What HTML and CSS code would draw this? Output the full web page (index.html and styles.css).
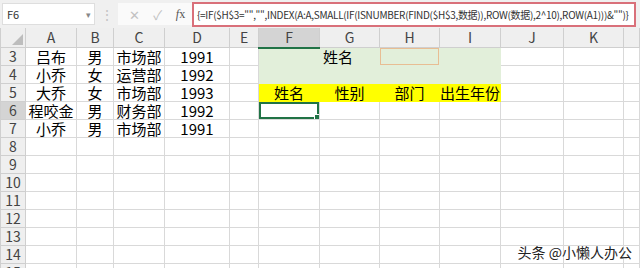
FILE: index.html
```html
<!DOCTYPE html>
<html lang="zh-CN">
<head>
    <meta charset="UTF-8">
    <title>数据查询</title>
    <link rel="stylesheet" href="styles.css">
</head>
<body>
    <div class="formula-bar">
        <div class="name-box"><span>F6</span><span class="caret">▾</span></div>
        <div class="grip">⋮</div>
        <div class="fx-buttons">
            <span class="btn-cancel">✕</span>
            <span class="btn-enter">✓</span>
            <span class="btn-fx"><i>f</i>x</span>
        </div>
        <div class="formula-input">{=IF($H$3="","",INDEX(A:A,SMALL(IF(ISNUMBER(FIND($H$3,数据)),ROW(数据),2^10),ROW(A1)))&amp;"")}</div>
    </div>

    <table class="sheet">
        <colgroup>
            <col style="width:25px"><col style="width:51px"><col style="width:37px"><col style="width:51px">
            <col style="width:65px"><col style="width:29px"><col style="width:61px"><col style="width:60px">
            <col style="width:60px"><col style="width:61px"><col style="width:63px"><col style="width:60px">
            <col>
        </colgroup>
        <tr class="col-head">
            <th class="corner"><svg width="11" height="11" viewBox="0 0 11 11"><polygon points="11,0 11,11 0,11" fill="#bdbdbd"/></svg></th>
            <th>A</th><th>B</th><th>C</th><th>D</th><th>E</th><th class="active">F</th><th>G</th><th>H</th><th>I</th><th>J</th><th>K</th><th></th>
        </tr>
        <tr>
            <th>3</th><td>吕布</td><td>男</td><td>市场部</td><td>1991</td><td></td>
            <td class="green"></td><td class="green left">姓名</td><td class="green lookup"></td><td class="green"></td><td></td><td></td><td></td>
        </tr>
        <tr>
            <th>4</th><td>小乔</td><td>女</td><td>运营部</td><td>1992</td><td></td>
            <td class="green"></td><td class="green"></td><td class="green"></td><td class="green"></td><td></td><td></td><td></td>
        </tr>
        <tr>
            <th>5</th><td>大乔</td><td>女</td><td>市场部</td><td>1993</td><td></td>
            <td class="yellow">姓名</td><td class="yellow">性别</td><td class="yellow">部门</td><td class="yellow">出生年份</td><td></td><td></td><td></td>
        </tr>
        <tr>
            <th class="active">6</th><td>程咬金</td><td>男</td><td>财务部</td><td>1992</td><td></td>
            <td class="selected"></td><td></td><td></td><td></td><td></td><td></td><td></td>
        </tr>
        <tr>
            <th>7</th><td>小乔</td><td>男</td><td>市场部</td><td>1991</td><td></td>
            <td></td><td></td><td></td><td></td><td></td><td></td><td></td>
        </tr>
        <tr><th>8</th><td></td><td></td><td></td><td></td><td></td><td></td><td></td><td></td><td></td><td></td><td></td><td></td></tr>
        <tr><th>9</th><td></td><td></td><td></td><td></td><td></td><td></td><td></td><td></td><td></td><td></td><td></td><td></td></tr>
        <tr><th>10</th><td></td><td></td><td></td><td></td><td></td><td></td><td></td><td></td><td></td><td></td><td></td><td></td></tr>
        <tr><th>11</th><td></td><td></td><td></td><td></td><td></td><td></td><td></td><td></td><td></td><td></td><td></td><td></td></tr>
        <tr><th>12</th><td></td><td></td><td></td><td></td><td></td><td></td><td></td><td></td><td></td><td></td><td></td><td></td></tr>
        <tr><th>13</th><td></td><td></td><td></td><td></td><td></td><td></td><td></td><td></td><td></td><td></td><td></td><td></td></tr>
        <tr><th>14</th><td></td><td></td><td></td><td></td><td></td><td></td><td></td><td></td><td></td><td></td><td></td><td></td></tr>
        <tr><th>15</th><td></td><td></td><td></td><td></td><td></td><td></td><td></td><td></td><td></td><td></td><td></td><td></td></tr>
    </table>

    <div class="watermark">头条 @小懒人办公</div>
</body>
</html>
```

FILE: styles.css
```css
* {
    margin: 0;
    padding: 0;
    box-sizing: border-box;
}

body {
    width: 640px;
    height: 268px;
    overflow: hidden;
    position: relative;
    background-color: #fff;
    font-family: "Noto Sans CJK SC", "Noto Sans", sans-serif;
    color: #000;
}

/* Barra de fórmula */
.formula-bar {
    height: 28px;
    background-color: #f0f0f0;
    display: flex;
    align-items: center;
    padding: 0 4px 0 2px;
}

.name-box {
    width: 93px;
    height: 22px;
    background-color: #fff;
    border: 1px solid #dedede;
    display: flex;
    align-items: center;
    justify-content: space-between;
    padding: 0 3px 0 4px;
    font-size: 11px;
    color: #333;
}

.caret {
    font-size: 9px;
    color: #888;
}

.grip {
    width: 23px;
    text-align: center;
    color: #c4c4c4;
    font-size: 14px;
}

.fx-buttons {
    width: 74px;
    height: 22px;
    background-color: #fafafa;
    display: flex;
    align-items: center;
    justify-content: space-around;
    padding-left: 4px;
}

.btn-cancel, .btn-enter {
    color: #c2c2c2;
    font-size: 13px;
}

.btn-fx {
    color: #555;
    font-family: "Liberation Serif", serif;
    font-size: 12px;
}

.formula-input {
    flex: 1;
    height: 25px;
    border: 2px solid #d9707a;
    background-color: #fff;
    font-size: 10px;
    line-height: 21px;
    letter-spacing: -0.3px;
    padding-left: 3px;
    white-space: nowrap;
    overflow: hidden;
    color: #333;
}

/* Planilha */
.sheet {
    width: 640px;
    table-layout: fixed;
    border-collapse: collapse;
}

.sheet tr {
    height: 17.5px;
}

.sheet tr.col-head {
    height: 19.5px;
}

.sheet th, .sheet td {
    border: 1px solid #d9d9d9;
    padding: 0;
    white-space: nowrap;
    overflow: hidden;
    text-align: center;
    line-height: 17px;
}

.sheet th {
    background-color: #efefef;
    border-color: #cfcfcf;
    color: #444;
    font-weight: normal;
    font-size: 14px;
}

.col-head th {
    border-top: none;
}

.sheet th.active {
    background-color: #d4d4d4;
}

.col-head th.active {
    border-bottom: 2px solid #217346;
}

.corner {
    text-align: right !important;
    vertical-align: bottom;
}

.corner svg {
    display: block;
    margin: 0 2px 2px auto;
}

.sheet td {
    font-size: 15px;
}

.sheet td.left {
    text-align: left;
    padding-left: 3px;
}

.green {
    background-color: #e2efda;
    border-color: #e2efda !important;
}

.yellow {
    background-color: #ffff00;
    border-color: #ffff00 !important;
}

.lookup {
    box-shadow: inset 0 0 0 1px #e8bd93;
}

.selected {
    position: relative;
    box-shadow: inset 0 0 0 2px #217346;
}

.selected::after {
    content: "";
    position: absolute;
    right: -2px;
    bottom: -2px;
    width: 5px;
    height: 5px;
    background-color: #217346;
    border: 1px solid #fff;
}

.watermark {
    position: absolute;
    right: 8px;
    bottom: 6px;
    font-size: 14px;
    color: #222;
    text-shadow: 0 0 2px #fff, 0 0 1px #fff;
}
```
